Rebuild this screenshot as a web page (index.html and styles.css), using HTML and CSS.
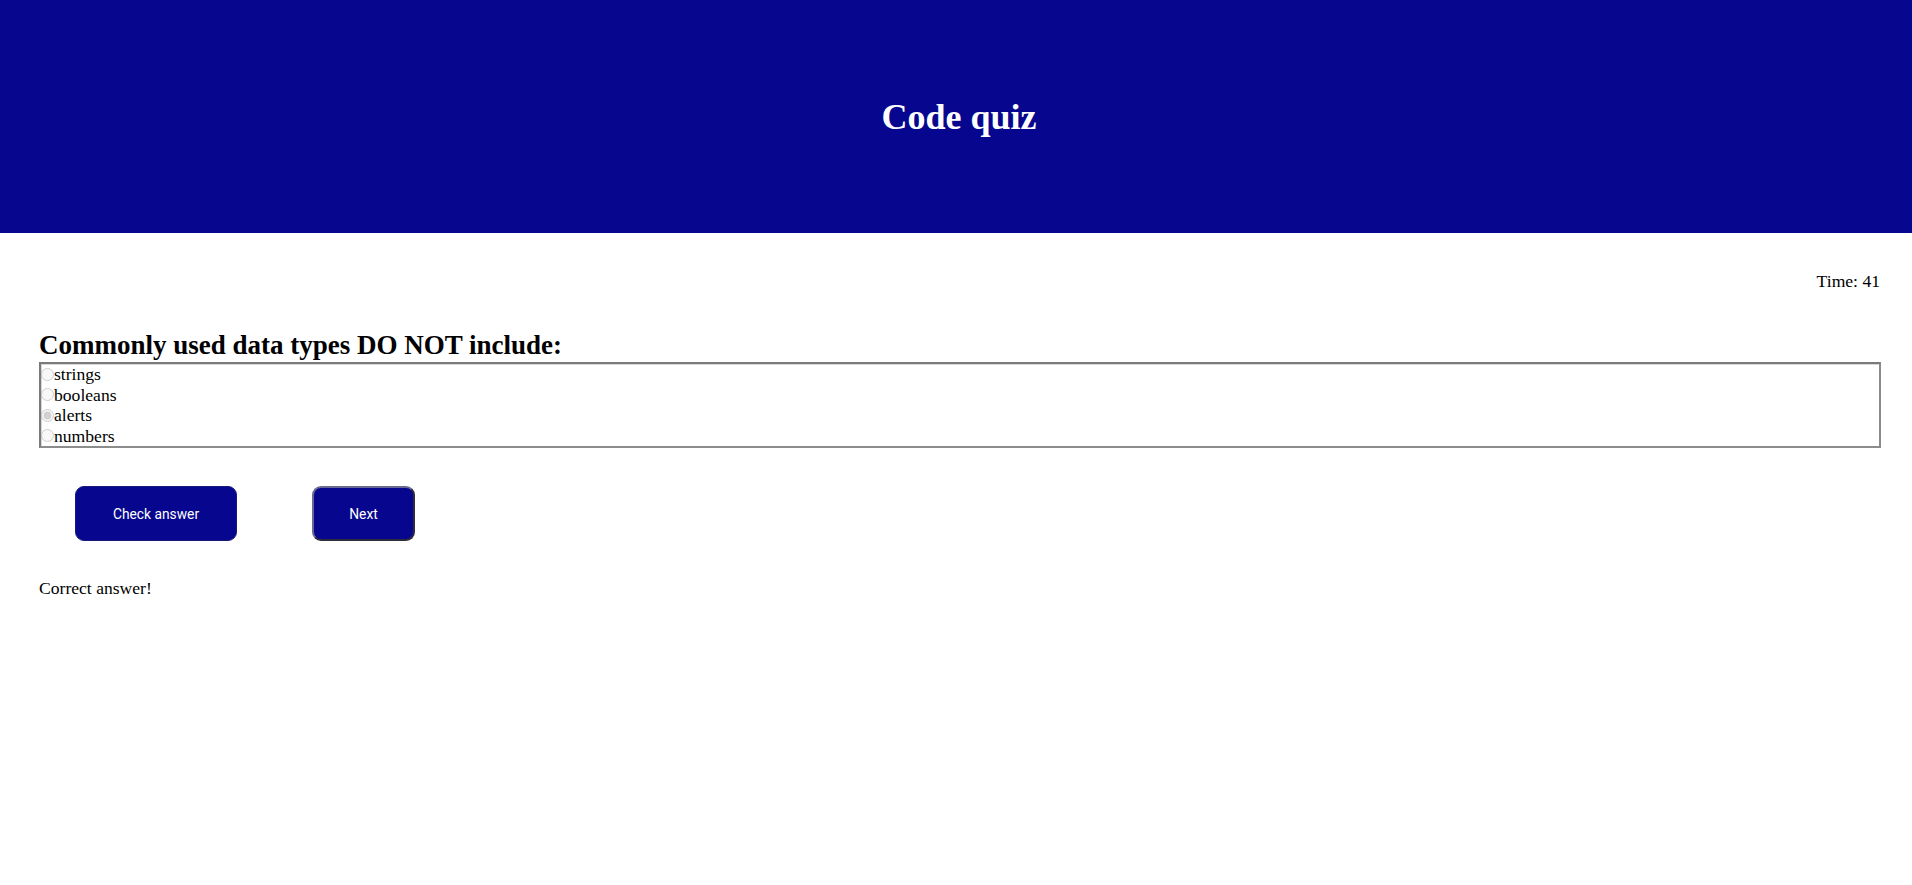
FILE: index.html
```html
<!DOCTYPE html>
<html lang="en">
<head>
<meta charset="utf-8">
<title>Code quiz</title>
<link rel="stylesheet" href="styles.css">
</head>
<body>
<header class="banner">
  <h1 class="banner-title">Code quiz</h1>
</header>
<main class="quiz">
  <div class="timer">Time: 41</div>
  <h2 class="question">Commonly used data types DO NOT include:</h2>
  <fieldset class="choices">
    <label class="choice"><input type="radio" name="q" disabled>strings</label>
    <label class="choice"><input type="radio" name="q" disabled>booleans</label>
    <label class="choice"><input type="radio" name="q" disabled checked>alerts</label>
    <label class="choice"><input type="radio" name="q" disabled>numbers</label>
  </fieldset>
  <div class="actions">
    <button class="btn btn-check" type="button">Check answer</button>
    <button class="btn btn-next" type="button">Next</button>
  </div>
  <p class="feedback">Correct answer!</p>
</main>
</body>
</html>
```

FILE: styles.css
```css
html, body {
  margin: 0;
  padding: 0;
  background: #ffffff;
}

body {
  font-family: "Liberation Serif", "Times New Roman", serif;
  font-size: 17.6px;
  color: #000000;
}

.banner {
  height: 233px;
  background: #06068f;
  display: flex;
  align-items: center;
  justify-content: center;
}

.banner-title {
  margin: 0 0 0 6px;
  color: #ffffff;
  font-size: 36px;
  font-weight: bold;
}

.quiz {
  padding: 38px 31px 0 39px;
  display: flex;
  flex-direction: column;
}

.timer {
  align-self: flex-end;
  line-height: 20px;
  margin-right: 1px;
}

.question {
  margin: 39px 0 0 0;
  font-size: 27px;
  font-weight: bold;
  line-height: 31px;
}

.choices {
  margin: 1px 0 0 0;
  padding: 0;
  border: 2px solid #7a7a7a;
  border-right-color: #8c8c8c;
  border-bottom-color: #8c8c8c;
  box-shadow: inset 1px 1px 0 #d8d8d8;
  display: flex;
  flex-direction: column;
  min-width: 0;
}

.choice {
  display: flex;
  align-items: center;
  height: 20.5px;
  line-height: 20.5px;
}

.choice input {
  margin: 0;
  width: 13px;
  height: 13px;
}

.actions {
  display: flex;
  gap: 75px;
  margin-top: 38px;
  padding-left: 36px;
}

.btn {
  height: 55px;
  padding: 0;
  background: #06068f;
  color: #ffffff;
  font-family: Roboto, "Noto Sans", sans-serif;
  font-size: 13.8px;
  white-space: nowrap;
  border-radius: 9px;
  cursor: pointer;
}

.btn-check {
  width: 162px;
  border: 1px solid #1a1a7a;
}

.btn-next {
  width: 103px;
  border: 2px outset #6a6a90;
}

.feedback {
  margin: 37px 0 0 0;
  line-height: 20px;
}
```
